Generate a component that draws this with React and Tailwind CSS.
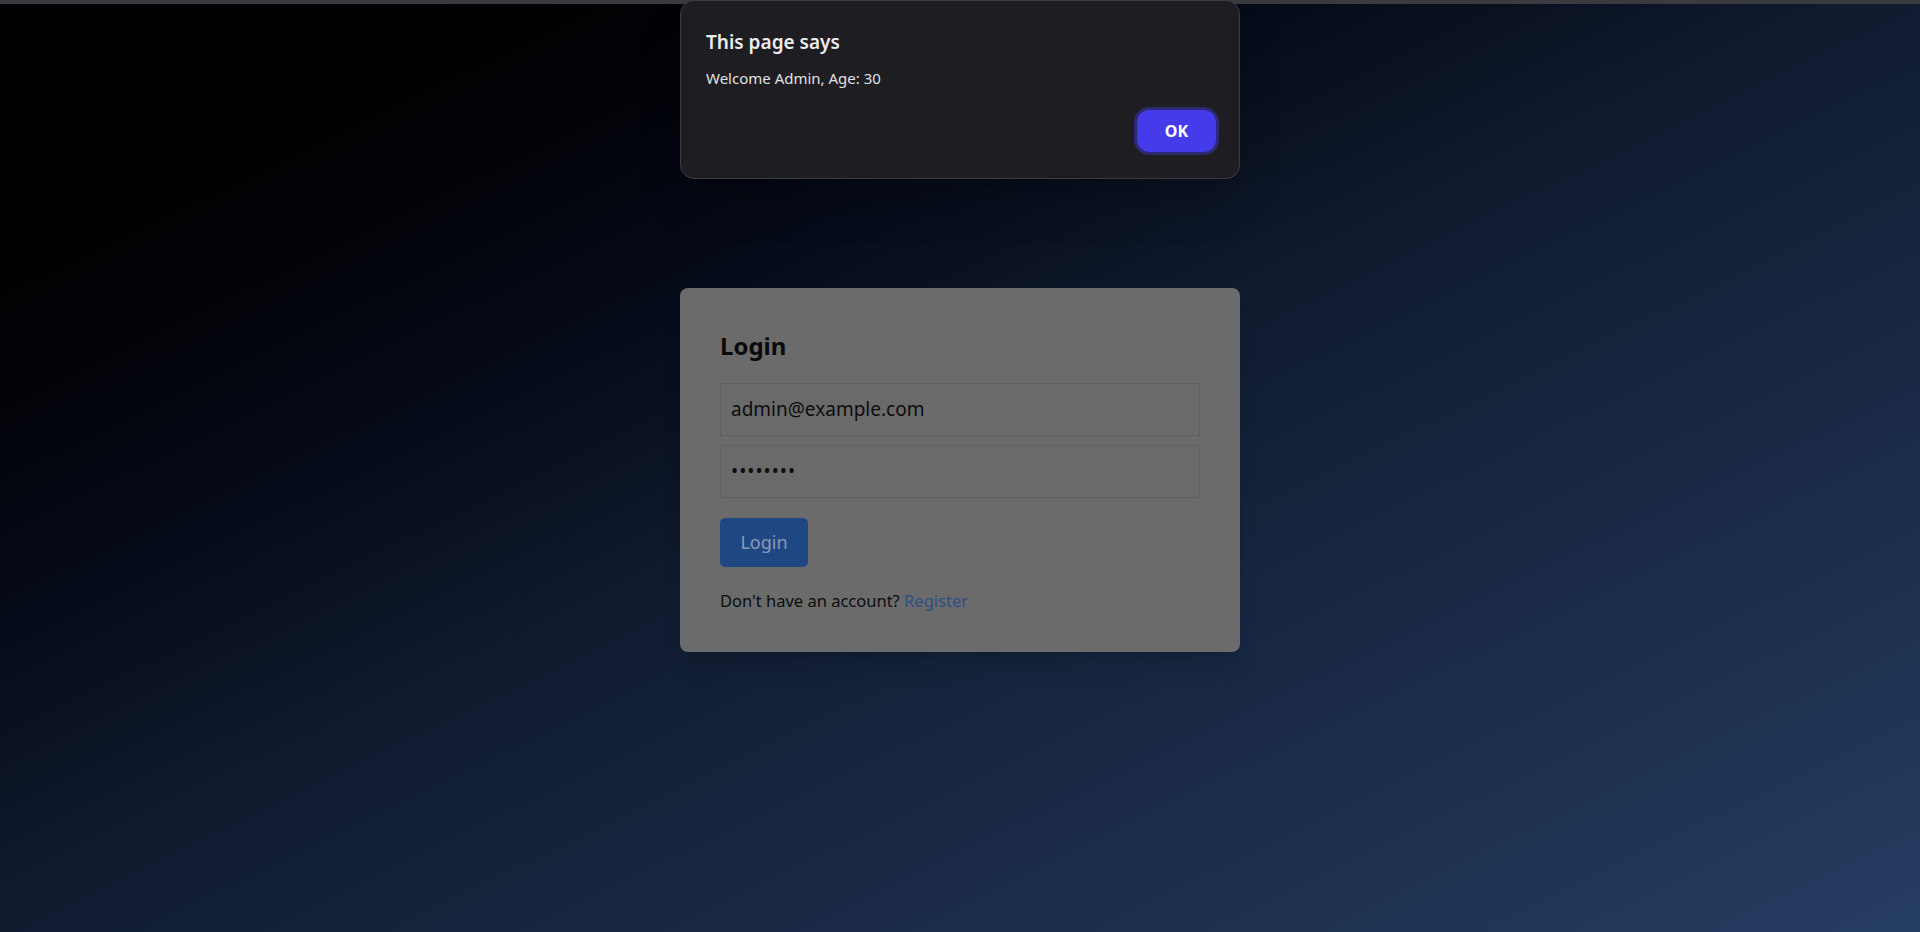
const App = () => {
  return (
    <div className="relative min-h-[932px] w-full bg-gradient-to-br from-black via-[#111c31] to-[#253d62] font-['Noto_Sans',_'Open_Sans',_sans-serif]">
      {/* browser top strip */}
      <div className="h-[4px] w-full bg-[#3b3b3f]" />

      {/* login card */}
      <div className="flex justify-center pt-[284px]">
        <div className="w-[560px] rounded-[8px] bg-[#6b6b6b] px-10 pt-[42px] pb-[38px] shadow-xl">
          <h2 className="text-[24px] font-bold leading-[32px] text-[#0a0a0a]">Login</h2>

          <div className="mt-[21px] flex flex-col gap-[9px]">
            <div className="flex h-[53px] items-center border border-[#5f5f5f] bg-[#6a6a6a] px-[10px] text-[19px] text-[#0d0d0d]">
              admin@example.com
            </div>
            <div className="flex h-[53px] items-center border border-[#5f5f5f] bg-[#6a6a6a] px-[10px] text-[19px] tracking-[1px] text-[#0d0d0d]">
              ••••••••
            </div>
          </div>

          <button className="mt-[20px] h-[49px] w-[88px] rounded-[5px] bg-[#1e4783] text-[18px] text-[#8a9ab3]">Login</button>

          <p className="mt-[22px] text-[16.5px] text-[#0d0d0d]">
            Don't have an account? <span className="text-[#2d4f86]">Register</span>
          </p>
        </div>
      </div>

      {/* alert dialog */}
      <div className="absolute left-[680px] top-0 w-[560px] rounded-[14px] border border-[#3c3b40] bg-[#1e1d21] pl-[25px] pr-[20px] pt-[28px] pb-[23px] shadow-2xl">
        <h3 className="text-[19px] font-semibold leading-[26px] text-[#ececec]">This page says</h3>
        <p className="mt-[12px] text-[15px] text-[#e2e2e2]">Welcome Admin, Age: 30</p>
        <div className="mt-[17px] flex justify-end">
          <div className="rounded-[15px] border-[3px] border-[#2e2a72]">
            <button className="h-[42px] w-[79px] rounded-[12px] bg-[#453bea] text-[16px] font-bold text-white">OK</button>
          </div>
        </div>
      </div>
    </div>
  );
};

export default App;
